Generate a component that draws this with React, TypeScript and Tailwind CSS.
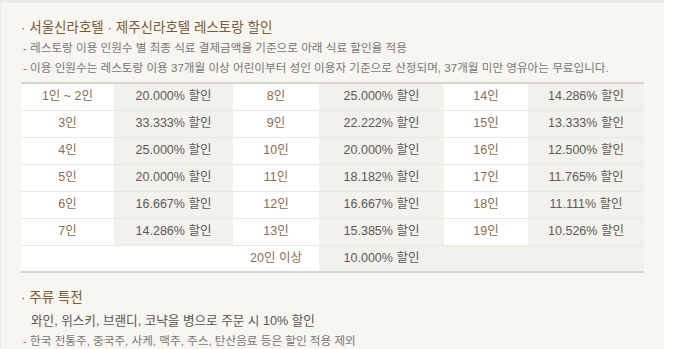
import React from 'react';

type Row = [string, string, string, string, string, string];

const rows: Row[] = [
    ['1인 ~ 2인', '20.000% 할인', '8인', '25.000% 할인', '14인', '14.286% 할인'],
    ['3인', '33.333% 할인', '9인', '22.222% 할인', '15인', '13.333% 할인'],
    ['4인', '25.000% 할인', '10인', '20.000% 할인', '16인', '12.500% 할인'],
    ['5인', '20.000% 할인', '11인', '18.182% 할인', '17인', '11.765% 할인'],
    ['6인', '16.667% 할인', '12인', '16.667% 할인', '18인', '11.111% 할인'],
    ['7인', '14.286% 할인', '13인', '15.385% 할인', '19인', '10.526% 할인'],
];

const people = 'bg-white text-[#8a6c52]';
const rate = 'bg-[#f3f1eb] text-[#5a5a5a]';

const App: React.FC = () => {
    return (
        <div className="h-[349px] w-[674px] overflow-hidden bg-white font-['Liberation_Sans','Noto_Sans_CJK_KR',sans-serif]">
            <div className="h-full w-[664px] border-t-[3px] border-l border-[#ecebe6] bg-[#f7f6f1] pl-[20px] pr-[21px] pt-[15px]">
                <h3 className="text-[13.5px] leading-[20px] text-[#7a5b40]">· 서울신라호텔 · 제주신라호텔 레스토랑 할인</h3>
                <p className="pl-[2px] text-[11.6px] leading-[20px] text-[#777]">- 레스토랑 이용 인원수 별 최종 식료 결제금액을 기준으로 아래 식료 할인율 적용</p>
                <p className="pl-[2px] text-[11.6px] leading-[20px] text-[#777]">- 이용 인원수는 레스토랑 이용 37개월 이상 어린이부터 성인 이용자 기준으로 산정되며, 37개월 미만 영유아는 무료입니다.</p>

                <table className="mt-[4px] w-[623px] table-fixed border-collapse border-t-2 border-b-2 border-[#d9d6cd] text-center text-[12.5px]">
                    <colgroup>
                        <col className="w-[93px]" />
                        <col className="w-[119px]" />
                        <col className="w-[86px]" />
                        <col className="w-[125px]" />
                        <col className="w-[84px]" />
                        <col className="w-[116px]" />
                    </colgroup>
                    <tbody>
                        {rows.map((r) => (
                            <tr key={r[0]} className="h-[27px] border-b border-[#ebe8e1]">
                                <td className={people}>{r[0]}</td>
                                <td className={rate}>{r[1]}</td>
                                <td className={people}>{r[2]}</td>
                                <td className={rate}>{r[3]}</td>
                                <td className={people}>{r[4]}</td>
                                <td className={rate}>{r[5]}</td>
                            </tr>
                        ))}
                        <tr className="h-[27px]">
                            <td colSpan={2} className="bg-white"></td>
                            <td className={people}>20인 이상</td>
                            <td className={rate}>10.000% 할인</td>
                            <td colSpan={2} className="bg-[#f3f1eb]"></td>
                        </tr>
                    </tbody>
                </table>

                <h3 className="mt-[15px] text-[13.5px] leading-[20px] text-[#7a5b40]">· 주류 특전</h3>
                <p className="mt-[3px] pl-[10px] text-[12.6px] leading-[20px] text-[#555]">와인, 위스키, 브랜디, 코냑을 병으로 주문 시 10% 할인</p>
                <p className="pl-[2px] text-[11.6px] leading-[19px] text-[#777]">- 한국 전통주, 중국주, 사케, 맥주, 주스, 탄산음료 등은 할인 적용 제외</p>
            </div>
        </div>
    );
};

export default App;
